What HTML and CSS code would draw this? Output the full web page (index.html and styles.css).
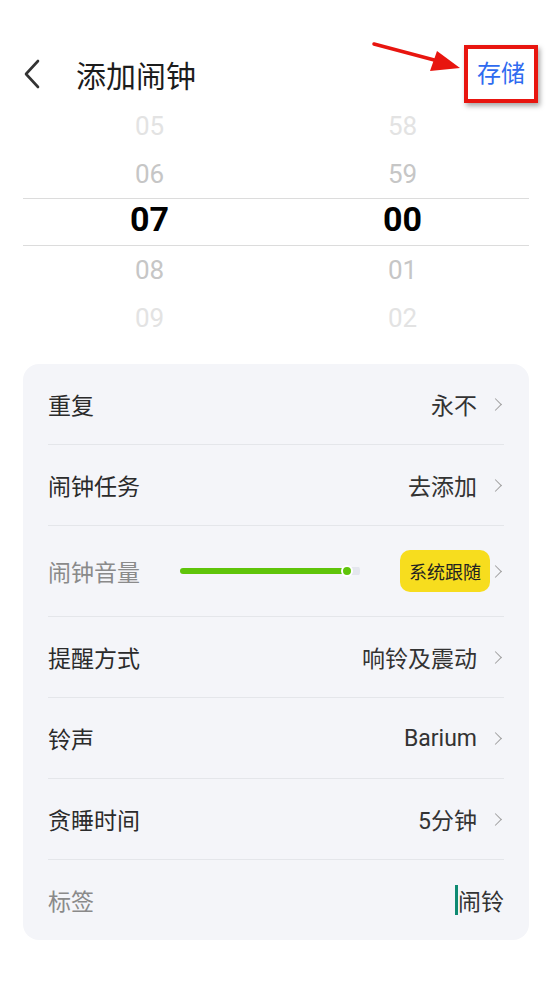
FILE: index.html
```html
<!DOCTYPE html>
<html lang="zh-CN">

<head>
  <meta charset="UTF-8" />
  <meta name="viewport" content="width=device-width, initial-scale=1.0" />
  <title>添加闹钟</title>
  <link rel="stylesheet" href="styles.css">
</head>

<body>
  <!-- BARRA -->
  <div class="topbar">
    <svg class="back" width="20" height="30" viewBox="0 0 20 30">
      <path d="M16 2 L4 15 L16 28" fill="none" stroke="#333" stroke-width="2.6" stroke-linecap="round" stroke-linejoin="round" />
    </svg>
    <h1 class="title">添加闹钟</h1>
    <span class="save">存储</span>
    <svg class="arrow" width="100" height="40" viewBox="0 0 100 40">
      <line x1="4" y1="3" x2="68" y2="20" stroke="#e8150f" stroke-width="3.5" stroke-linecap="round" />
      <polygon points="90,27 60,30 67,10" fill="#e8150f" />
    </svg>
  </div>

  <!-- SELETTORE -->
  <div class="picker">
    <div class="col">
      <div class="num far">05</div>
      <div class="num near">06</div>
      <div class="num sel">07</div>
      <div class="num near">08</div>
      <div class="num far">09</div>
    </div>
    <div class="col">
      <div class="num far">58</div>
      <div class="num near">59</div>
      <div class="num sel">00</div>
      <div class="num near">01</div>
      <div class="num far">02</div>
    </div>
  </div>

  <!-- IMPOSTAZIONI -->
  <div class="card">
    <div class="row">
      <span class="label">重复</span>
      <span class="value">永不</span>
      <span class="chev"></span>
    </div>
    <div class="row">
      <span class="label">闹钟任务</span>
      <span class="value">去添加</span>
      <span class="chev"></span>
    </div>
    <div class="row tall">
      <span class="label muted">闹钟音量</span>
      <div class="slider">
        <div class="track"></div>
        <div class="thumb"></div>
      </div>
      <span class="badge">系统跟随</span>
      <span class="chev"></span>
    </div>
    <div class="row">
      <span class="label">提醒方式</span>
      <span class="value">响铃及震动</span>
      <span class="chev"></span>
    </div>
    <div class="row">
      <span class="label">铃声</span>
      <span class="value">Barium</span>
      <span class="chev"></span>
    </div>
    <div class="row">
      <span class="label">贪睡时间</span>
      <span class="value">5分钟</span>
      <span class="chev"></span>
    </div>
    <div class="row last">
      <span class="label muted">标签</span>
      <span class="value input"><i class="caret"></i>闹铃</span>
    </div>
  </div>
</body>

</html>
```

FILE: styles.css
```css
body {
  margin: 0;
  background-color: #fff;
  font-family: Roboto, "Noto Sans CJK SC", sans-serif;
  color: #222;
}

.topbar {
  position: relative;
  display: flex;
  align-items: center;
  height: 56px;
  margin-top: 46px;
  padding: 0 14px 0 22px;
}

.back {
  flex: none;
}

.title {
  flex: 1;
  margin: 0 0 0 34px;
  font-size: 30px;
  font-weight: 400;
  color: #1c1c1c;
}

.save {
  font-size: 24px;
  line-height: 34px;
  color: #2f6bf0;
  padding: 8px 9px;
  border: 4px solid #e8150f;
  box-shadow: 2px 3px 5px rgba(0, 0, 0, 0.35);
}

.arrow {
  position: absolute;
  left: 370px;
  top: -5px;
}

.picker {
  display: flex;
  margin: 0 23px 0;
  position: relative;
}

.col {
  flex: 1;
}

.num {
  height: 48px;
  line-height: 48px;
  text-align: center;
  font-size: 26px;
}

.far {
  color: #e3e3e3;
}

.near {
  color: #c6c6c6;
}

.picker::before,
.picker::after {
  content: "";
  position: absolute;
  left: 0;
  right: 0;
  height: 1px;
  background-color: #dcdcdc;
}

.picker::before {
  top: 96px;
}

.picker::after {
  top: 143px;
}

.sel {
  font-size: 34px;
  font-weight: 700;
  color: #000;
  line-height: 42px;
}

.card {
  margin: 22px 23px 0;
  background-color: #f4f5f9;
  border-radius: 16px;
  padding: 0 25px;
}

.row {
  display: flex;
  align-items: center;
  height: 80px;
  border-bottom: 1px solid #e4e6ea;
  font-size: 23px;
}

.row.tall {
  height: 90px;
}

.row.last {
  border-bottom: none;
}

.label {
  flex: 1;
  color: #2b2b2b;
}

.label.muted {
  color: #8a8a8a;
}

.value {
  color: #333;
}

.chev {
  width: 8px;
  height: 8px;
  border-top: 1.5px solid #a0a0a0;
  border-right: 1.5px solid #a0a0a0;
  transform: rotate(45deg);
  margin: 0 4px 0 14px;
}

.slider {
  position: relative;
  width: 180px;
  height: 10px;
  margin-right: 40px;
  background: linear-gradient(#e4e6ee, #e4e6ee) no-repeat right center / 14px 8px;
  border-radius: 4px;
}

.track {
  position: absolute;
  left: 0;
  top: 2px;
  width: 168px;
  height: 6px;
  border-radius: 3px;
  background-color: #5fc40a;
}

.thumb {
  position: absolute;
  left: 161px;
  top: -1px;
  width: 8px;
  height: 8px;
  border-radius: 50%;
  background-color: #5fc40a;
  border: 2px solid #fff;
}

.badge {
  background-color: #f7dd1e;
  color: #222;
  font-size: 18px;
  padding: 8px 9px;
  border-radius: 10px;
}

.row .badge + .chev {
  margin-left: 1px;
}

.input {
  display: flex;
  align-items: center;
}

.caret {
  display: inline-block;
  width: 3px;
  height: 30px;
  background-color: #0f8a72;
  margin-right: 0;
}
```
